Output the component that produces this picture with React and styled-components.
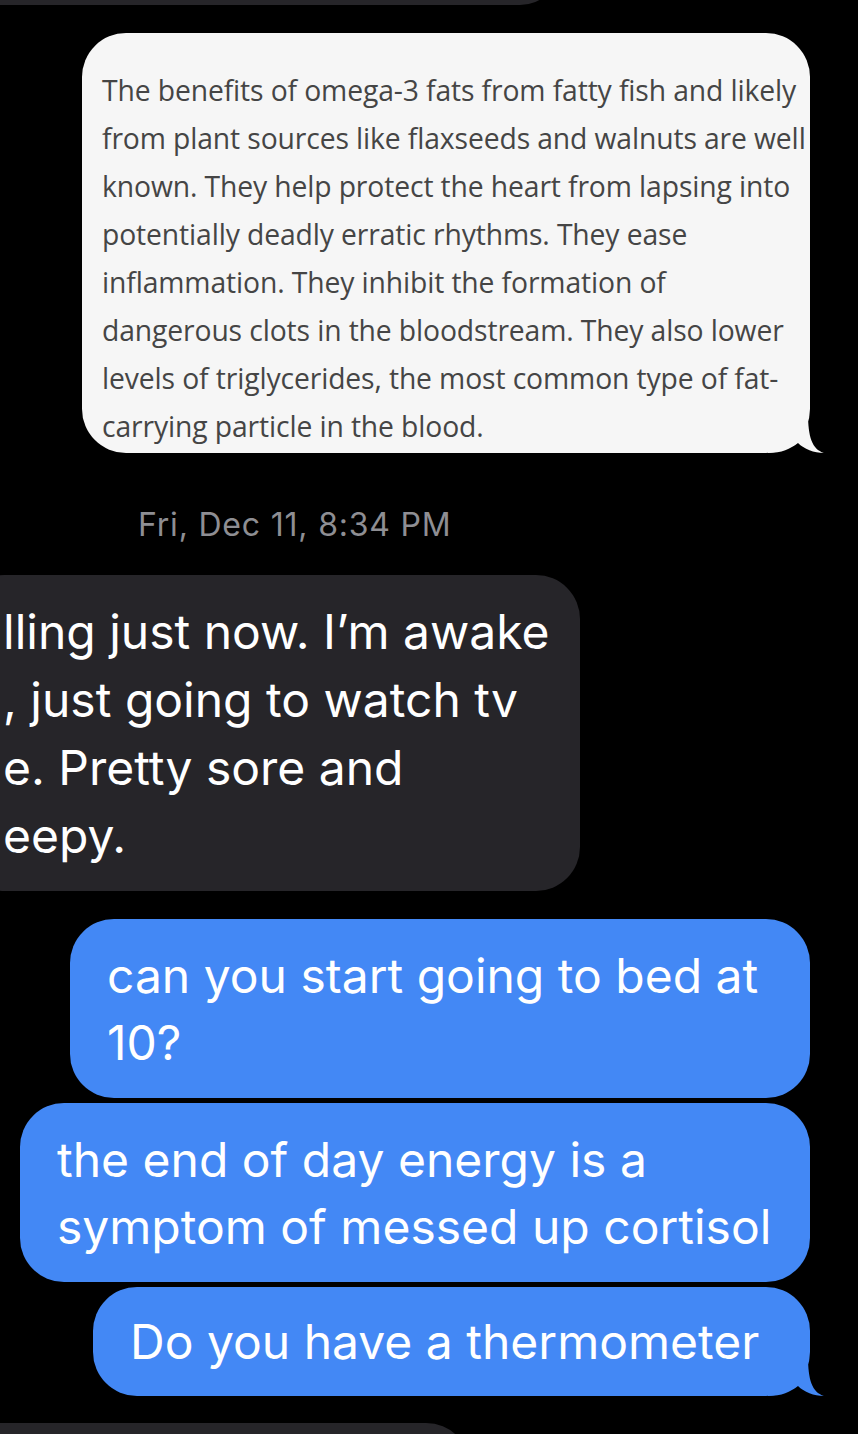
import styled, { createGlobalStyle } from "styled-components";

const GlobalStyle = createGlobalStyle`
  html, body {
    margin: 0;
    padding: 0;
    background: #000;
  }
`;

const Screen = styled.div`
  width: 858px;
  height: 1434px;
  overflow: hidden;
  background: #000;
  display: flex;
  flex-direction: column;
  font-family: Inter, Roboto, "Liberation Sans", sans-serif;
  & > * {
    flex-shrink: 0;
  }
`;

const Row = styled.div`
  display: flex;
  justify-content: ${(p) => (p.$mine ? "flex-end" : "flex-start")};
  padding-right: ${(p) => (p.$mine ? "48px" : "0px")};
  margin-top: ${(p) => p.$gap || 0}px;
`;

const DarkStub = styled.div`
  width: 560px;
  height: 40px;
  margin-top: -35px;
  background: #262529;
  border-bottom-right-radius: 44px;
`;

const BottomStub = styled.div`
  width: 470px;
  height: 60px;
  background: #262529;
  border-top-right-radius: 44px;
`;

const Bubble = styled.div`
  position: relative;
  border-radius: 44px;
  background: ${(p) => p.$bg};
  color: ${(p) => p.$fg};
`;

const ArticleBubble = styled(Bubble)`
  width: 728px;
  height: 420px;
  margin-left: 82px;
  box-sizing: border-box;
  padding: 33px 0 0 20px;
  font-family: "Open Sans", Lato, sans-serif;
  font-size: 28.3px;
  line-height: 48px;
  letter-spacing: -0.12px;
  color: #454545;
`;

const ArticleText = styled.div`
  white-space: nowrap;
`;

const Tail = styled.svg`
  position: absolute;
  right: -18px;
  bottom: 0;
  width: 60px;
  height: 40px;
  display: block;
`;

const Stamp = styled.div`
  padding-left: 138px;
  margin-top: 52px;
  color: #8e8e93;
  font-size: 32px;
  letter-spacing: 0.8px;
  line-height: 40px;
`;

const TheirBubble = styled(Bubble)`
  width: 620px;
  margin-left: -40px;
  box-sizing: border-box;
  padding: 23px 0 21px 43px;
  font-size: 48px;
  line-height: 68px;
`;

const MyBubble = styled(Bubble)`
  padding: ${(p) => (p.$single ? "21px 46px 21px 37px" : "23px 48px 22px 37px")};
  font-size: 48px;
  line-height: 67px;
  box-sizing: border-box;
  width: ${(p) => p.$w}px;
`;

const Line = styled.div`
  white-space: nowrap;
`;

function BubbleTail({ color }) {
  return (
    <Tail viewBox="0 0 60 40">
      <path
        d="M0 40 C14 40 22 36 30 30 C36 36 46 40 56 40 C44 36 40 24 40 0 L0 0 Z"
        fill={color}
      />
    </Tail>
  );
}

const article = [
  "The benefits of omega-3 fats from fatty fish and likely",
  "from plant sources like flaxseeds and walnuts are well",
  "known. They help protect the heart from lapsing into",
  "potentially deadly erratic rhythms. They ease",
  "inflammation. They inhibit the formation of",
  "dangerous clots in the bloodstream. They also lower",
  "levels of triglycerides, the most common type of fat-",
  "carrying particle in the blood.",
];

const theirs = [
  "lling just now. I\u2019m awake",
  ", just going to watch tv",
  "e. Pretty sore and",
  "eepy.",
];

const BLUE = "#4388f5";

export default function App() {
  return (
    <>
      <GlobalStyle />
      <Screen>
        <DarkStub />
        <Row $gap={28}>
          <ArticleBubble $bg="#f6f6f6" $fg="#454545">
            {article.map((l) => (
              <ArticleText key={l}>{l}</ArticleText>
            ))}
            <BubbleTail color="#f6f6f6" />
          </ArticleBubble>
        </Row>
        <Stamp>Fri, Dec 11, 8:34 PM</Stamp>
        <Row $gap={30}>
          <TheirBubble $bg="#262529" $fg="#fff">
            {theirs.map((l) => (
              <Line key={l}>{l}</Line>
            ))}
          </TheirBubble>
        </Row>
        <Row $mine $gap={28}>
          <MyBubble $bg={BLUE} $fg="#fff" $w={740}>
            <Line>can you start going to bed at</Line>
            <Line>10?</Line>
          </MyBubble>
        </Row>
        <Row $mine $gap={5}>
          <MyBubble $bg={BLUE} $fg="#fff" $w={790}>
            <Line>the end of day energy is a</Line>
            <Line>symptom of messed up cortisol</Line>
          </MyBubble>
        </Row>
        <Row $mine $gap={5}>
          <MyBubble $single $bg={BLUE} $fg="#fff" $w={717}>
            <Line>Do you have a thermometer</Line>
            <BubbleTail color={BLUE} />
          </MyBubble>
        </Row>
        <Row $gap={27}>
          <BottomStub />
        </Row>
      </Screen>
    </>
  );
}
